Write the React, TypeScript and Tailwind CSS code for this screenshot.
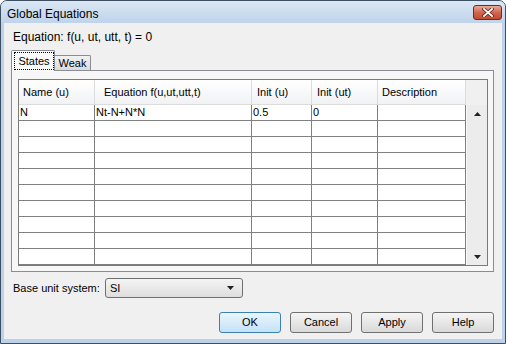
import React from 'react';

const columns = [
  { label: 'Name (u)', width: 'w-[76px]', pad: 'pl-[4px]' },
  { label: 'Equation f(u,ut,utt,t)', width: 'w-[157px]', pad: 'pl-[9px]' },
  { label: 'Init (u)', width: 'w-[60px]', pad: 'pl-[5px]' },
  { label: 'Init (ut)', width: 'w-[66px]', pad: 'pl-[5px]' },
  { label: 'Description', width: 'w-[88px]', pad: 'pl-[4px]' },
];

const rows: string[][] = [
  ['N', 'Nt-N+N*N', '0.5', '0', ''],
  ...Array.from({ length: 9 }, () => ['', '', '', '', '']),
];

const Arrow: React.FC<{ up?: boolean }> = ({ up }) => (
  <svg width="7" height="4" viewBox="0 0 7 4">
    <polygon points={up ? '0,4 3.5,0 7,4' : '0,0 7,0 3.5,4'} fill="#222" />
  </svg>
);

const CloseButton = () => (
  <div className="mt-[4px] self-start w-[29px] h-[15px] rounded-[3px] border border-[#6e2b1f] bg-gradient-to-b from-[#e8a999] via-[#d2654d] to-[#c24a31] flex items-center justify-center">
    <svg width="12" height="9" viewBox="0 0 12 9">
      <path d="M2 1 L10 8 M10 1 L2 8" stroke="#5a2418" strokeWidth="3.4" strokeLinecap="square" />
      <path d="M2 1 L10 8 M10 1 L2 8" stroke="#fff" strokeWidth="1.8" strokeLinecap="square" />
    </svg>
  </div>
);

const Button: React.FC<{ label: string; primary?: boolean }> = ({ label, primary }) => (
  <button
    className={
      primary
        ? 'w-[62px] h-[21px] rounded-[3px] border border-[#3c7fb1] bg-gradient-to-b from-[#eaf5fc] to-[#c4e2f7] text-[11px] text-black'
        : 'w-[62px] h-[21px] rounded-[3px] border border-[#707070] bg-gradient-to-b from-[#f5f5f5] to-[#d9d9d9] text-[11px] text-black'
    }
  >
    {label}
  </button>
);

export default function App() {
  return (
    <div className="w-[506px] h-[344px] rounded-t-[7px] border border-[#3e4f64] bg-[#bdd1e8] flex flex-col overflow-hidden font-['Liberation_Sans',Arial,sans-serif] text-black">
      <div className="h-[22px] flex justify-between bg-gradient-to-b from-[#dbe7f4] to-[#bfd3ea] pl-[6px] pr-[3px]">
        <span className="text-[12px] leading-[22px] pt-[2px]">Global Equations</span>
        <CloseButton />
      </div>

      <div className="mx-[3px] h-[316px] bg-[#f0f0f0] flex flex-col">
        <div className="ml-[9px] mt-[6px] h-[16px] leading-[16px] text-[12px]">
          Equation: f(u, ut, utt, t) = 0
        </div>

        <div className="ml-[7px] mt-[5px] h-[20px] flex items-end">
          <div className="relative z-10 -mb-px w-[44px] h-[21px] border border-b-0 border-[#898c95] rounded-t-[2px] bg-[#fafafa] pl-[2px] pt-px">
            <div className="w-[40px] h-[18px] border border-dotted border-black flex items-center justify-center text-[11px]">
              States
            </div>
          </div>
          <div className="w-[36px] h-[15px] border border-l-0 border-b-0 border-[#898c95] rounded-tr-[2px] bg-gradient-to-b from-[#f2f2f2] to-[#dadada] flex items-center justify-center text-[11px]">
            Weak
          </div>
        </div>

        <div className="ml-[7px] w-[483px] h-[202px] border border-[#898c95] bg-[#f7f7f7] pt-[8px] pl-[6px]">
          <div className="w-[470px] h-[187px] border border-[#7a7a7a] bg-white flex">
            <div className="flex flex-col">
              <div className="flex h-[25px] border-b border-[#dcdcdc] bg-gradient-to-b from-white to-[#f1f2f4]">
                {columns.map((c) => (
                  <div
                    key={c.label}
                    className={`${c.width} ${c.pad} h-full border-r border-[#dcdcdc] flex items-center text-[11px] whitespace-nowrap`}
                  >
                    {c.label}
                  </div>
                ))}
              </div>
              {rows.map((r, i) => (
                <div key={i} className="flex h-[16px]">
                  {r.map((v, j) => (
                    <div
                      key={j}
                      className={`${columns[j].width} h-full border-r border-b border-[#808080] pl-px flex items-center text-[11px] leading-none`}
                    >
                      {v}
                    </div>
                  ))}
                </div>
              ))}
            </div>
            <div className="w-[21px] flex flex-col bg-[#ececec]">
              <div className="h-[25px] bg-[#f0f0f0]" />
              <div className="flex-1 flex flex-col justify-between border-l border-[#fafafa]">
                <div className="h-[17px] flex items-center justify-center">
                  <Arrow up />
                </div>
                <div className="h-[17px] flex items-center justify-center">
                  <Arrow />
                </div>
              </div>
            </div>
          </div>
        </div>

        <div className="mt-[6px] h-[20px] flex items-center">
          <span className="ml-[9px] w-[92px] text-[11px]">Base unit system:</span>
          <div className="w-[138px] h-[20px] rounded-[3px] border border-[#707070] bg-gradient-to-b from-[#f4f4f4] to-[#dedede] flex items-center justify-between pl-[4px] pr-[8px] text-[11px]">
            <span>SI</span>
            <Arrow />
          </div>
        </div>

        <div className="mt-[14px] flex justify-end gap-[9px] pr-[8px]">
          <Button label="OK" primary />
          <Button label="Cancel" />
          <Button label="Apply" />
          <Button label="Help" />
        </div>
      </div>
    </div>
  );
}
